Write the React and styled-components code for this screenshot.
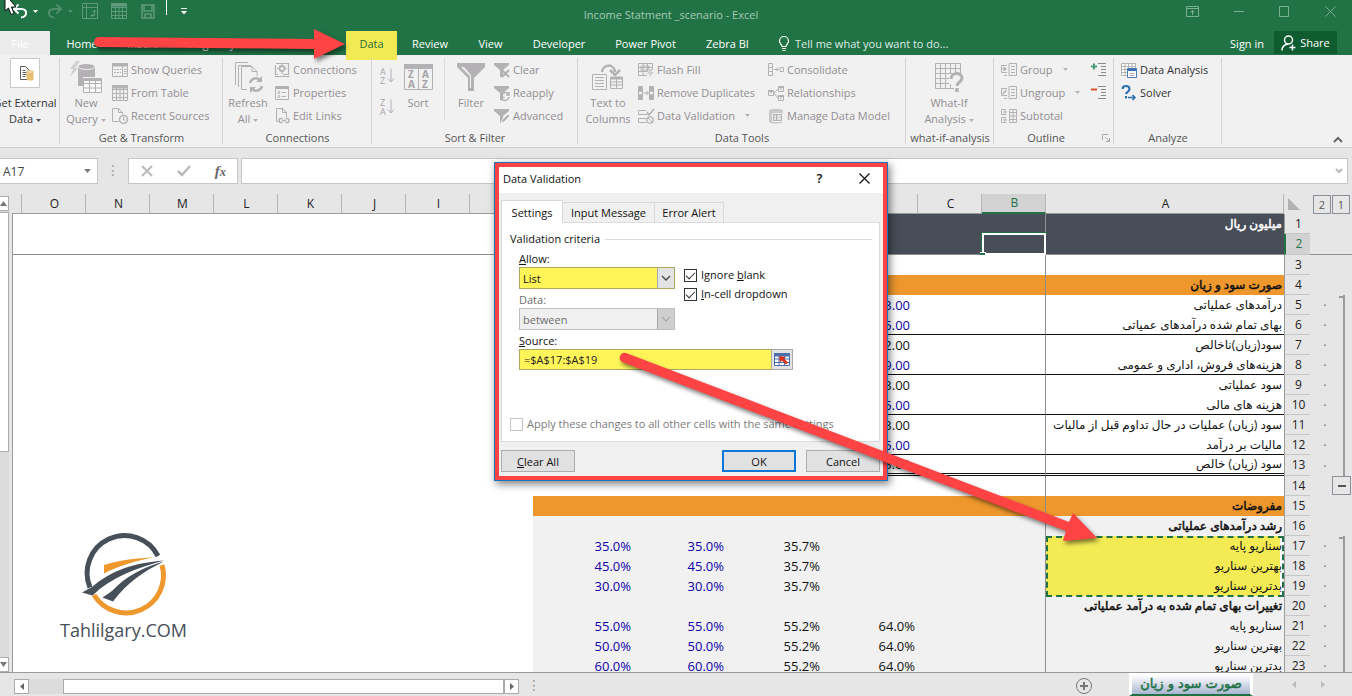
import React, { useState } from "react";
import styled, { createGlobalStyle, css } from "styled-components";

const GRAY = "#b4b1b4";

/* ---------- icons ---------- */

const Svg = ({ w = 16, h = 16, children, ...rest }) => (
  <svg
    width={w}
    height={h}
    viewBox={`0 0 ${w} ${h}`}
    fill="none"
    stroke={GRAY}
    aria-hidden="true"
    {...rest}
  >
    {children}
  </svg>
);

const UndoIcon = (props) => (
  <Svg w={16} h={16} strokeWidth="2" {...props}>
    <path d="M2 6H9.500C16 6 15.500 14 9 14.500M6.500 1.500L2 6L6.500 10.500" />
  </Svg>
);
const PivotIcon = () => (
  <Svg stroke="#5f9b7a">
    <path d="M.5.5h15v15H.5zM.5 4.500h15M4.500.5v15M9 12.500h3.500V7M10.500 9l2-2 2 2M11 10.500l-2 2 2 2" />
  </Svg>
);
const TableIcon = ({ color = GRAY }) => (
  <Svg stroke={color}>
    <path d="M.5.5h15v15H.5zM.5 4.500h15M.5 8.500h15M.5 12.500h15M4.500 3v12M8 3v12M11.500 3v12" />
    <path d="M1 2h14" strokeWidth="3" />
  </Svg>
);
const SaveIcon = () => (
  <Svg w={14} h={15} stroke="#5f9b7a" strokeWidth="1.500">
    <path d="M1 1h12v13H1zM3 1v6h8V1M4 14v-4h6v4" />
  </Svg>
);
const MouseIcon = () => (
  <Svg w={14} h={18} fill="#fff" stroke="#111">
    <path d="M1-6V11L4.500 8L7 14.500L10 13.500L7.500 7H12Z" />
  </Svg>
);
const GetDataIcon = () => (
  <Svg w={30} h={30} stroke="none">
    <path d="M.5.5h29v29H.5z" fill="#fff" stroke="#c9c9c9" />
    <path d="M10.500 8.500h5l4 4v9h-9z" fill="#fff" stroke="#5a5a5a" />
    <path d="M12.500 12.500h3M12.500 14.500h4M12.500 16.500h4M12.500 18.500h3" stroke="#5a5a5a" />
    <path d="M16.500 14v7c0 2 7 2 7 0v-7z" fill="#e8bd74" />
    <ellipse cx="20" cy="14" rx="3.500" ry="1.500" fill="#f4d9a8" stroke="#e0b060" strokeWidth=".6" />
  </Svg>
);
const NewQueryIcon = () => (
  <Svg w={34} h={34}>
    <path d="M7 1L1 9h3L1 17l8-9H6l5-7z" fill="#d2d0d2" stroke="none" />
    <path d="M9 7v19h5V17h12V7z" fill={GRAY} stroke="none" />
    <ellipse cx="17.500" cy="6.500" rx="8.500" ry="3" fill={GRAY} stroke="#f1f1f1" />
    <path d="M14.500 18.500h18v14h-18zM14.500 23.500h18M14.500 28h18M20.500 20v12M26.500 20v12" fill="#f8f8f8" />
    <path d="M15 19.500h17" strokeWidth="3" />
  </Svg>
);
const ShowQueriesIcon = () => (
  <Svg>
    <path d="M10.500 4v10M12 7.500h2.500M12 9.500h2.500M12 11.500h2.500" />
    <path d="M2 7.500h7M2 10.500h7" strokeDasharray="2 1" />
    <path d="M.5 1.500h15v13H.5z" />
    <path d="M1 3h14" strokeWidth="3" />
  </Svg>
);
const RecentIcon = () => (
  <Svg>
    <path d="M7 13.500H.5V.5h6l4 4V6M6.500.5v4h4" />
    <circle cx="11.500" cy="11.500" r="4" strokeWidth="1.500" />
    <path d="M11.500 9v3h2" />
  </Svg>
);
const RefreshIcon = () => (
  <Svg w={32} h={32}>
    <path d="M3.500 24V1.500H16M6.500 26V4.500H19M15 28.500H9.500v-23H20l5 5V15M20 5.500v5h5" />
    <path d="M18 22a6 6 0 0 1 10-3M30 25a6 6 0 0 1-10 3" strokeWidth="2.500" />
    <path d="M30 15v6h-6zM18 32v-6h6z" fill={GRAY} stroke="none" />
  </Svg>
);
const ConnectionsIcon = () => (
  <Svg>
    <path d="M2 1.500h12.500v11H9M1.500 3v9.500H4M.5 14.500h15" strokeWidth="1.200" />
    <circle cx="8" cy="6.500" r="2.500" strokeWidth="1.800" />
    <path d="M8 3V1.500M8 10v2M4.500 6.500H3M11.500 6.500H13" />
  </Svg>
);
const PropertiesIcon = () => (
  <Svg>
    <path d="M1.500 1.500h13v13h-13zM8 7.500h4M8 11.500h4" />
    <path d="M1.500 2.500h13" strokeWidth="3" />
    <circle cx="5" cy="7.500" r="1" />
    <circle cx="5" cy="11.500" r="1" />
  </Svg>
);
const EditLinksIcon = () => (
  <Svg>
    <path d="M4 13.500H2.500V.5h6l4 4V9M8.500.5v4h4" />
    <path d="M8.500 14.500H7a2 2 0 0 1 0-4h1.500M11.500 10.500H13a2 2 0 0 1 0 4h-1.500M8 12.500h4" strokeWidth="1.500" />
  </Svg>
);
const SortLetters = ({ top, bottom }) => (
  <Svg w={15} h={18}>
    <g fill="#a5a2a5" stroke="none" fontFamily="Open Sans, sans-serif" fontSize="9">
      <text x="0" y="8">{top}</text>
      <text x="0" y="17">{bottom}</text>
    </g>
    <path d="M11 1.500v13M8 11.500l3 3.500 3-3.500" />
  </Svg>
);
const SortIcon = () => (
  <Svg w={29} h={26}>
    <path d="M.5.5h28v25H.5zM14.500 4v21" />
    <path d="M0 2.500h29" strokeWidth="5" />
    <g fill="#a5a2a5" stroke="none" fontFamily="Open Sans, sans-serif" fontSize="10" fontWeight="700">
      <text x="4" y="14">Z</text>
      <text x="4" y="24">A</text>
      <text x="18" y="14">A</text>
      <text x="18" y="24">Z</text>
    </g>
  </Svg>
);
const FilterIcon = () => (
  <Svg w={28} h={28} stroke="none" fill={GRAY}>
    <path d="M0 0h28v4L17 15v13h-6V15L0 4z" />
    <path d="M4 4l9 9v12h1V12L7 4z" fill="#f1f1f1" />
  </Svg>
);
const SmallFilter = ({ kind }) => (
  <Svg>
    <path d="M0 1h15v2L9 8v7H6V8L0 3z" fill={GRAY} stroke="none" />
    {kind === "clear" && <path d="M8 8l7 7M15 8l-7 7" strokeWidth="2" />}
    {kind === "reapply" && (
      <path d="M7.500 11a4 4 0 0 1 7-2M15 12a4 4 0 0 1-7 2M15 7v3h-3M7.500 15.500v-3h3" strokeWidth="1.500" />
    )}
    {kind === "advanced" && <path d="M7 15l1-3 6-6 2 2-6 6z" fill={GRAY} stroke="#f1f1f1" />}
  </Svg>
);
const TextColumnsIcon = () => (
  <Svg w={32} h={28}>
    <path d="M.5 11.500h14v15H.5zM3 14.500h9M3 17.500h9M3 20.500h9M3 23.500h9" />
    <path d="M18.500 14.500h12v11h-12zM18.500 19h12M18.500 22h12M24.500 15v10" />
    <path d="M18.500 15h12" strokeWidth="3" />
    <path d="M10 9C11 1 22 0 23 9" strokeWidth="2.500" />
    <path d="M18 7l5 5 5-5" strokeWidth="2.500" />
  </Svg>
);
const FlashFillIcon = () => (
  <Svg>
    <path d="M.5 1.500h14V8M.5 1.500v12H9M.5 5.500h14M.5 9.500h9M5 1.500v12M9.500 1.500v8" />
    <path d="M3 4h8v4H3z" />
    <path d="M12 7l-3 5h3l-1 4 5-6h-3l2-3z" fill="#d2d0d2" stroke="none" />
  </Svg>
);
const RemoveDupIcon = () => (
  <Svg>
    <path d="M.5 1.500h4v13h-4zM.5 6h4M.5 10h4M11.500 1.500h4v13h-4zM11.500 6h4M11.500 10h4M5.500 8h5M8.500 6l2 2-2 2" />
    <path d="M1 2h3v4H1zM1 10h3v4H1zM12 2h3v4h-3zM12 10h3v4h-3z" fill={GRAY} />
  </Svg>
);
const ValidationIcon = () => (
  <Svg>
    <path d="M8 2.500H.5v4h9M8 10.500H.5v4H8" />
    <path d="M9 4l2 3 5-6" strokeWidth="1.500" />
    <circle cx="12" cy="12" r="3.200" strokeWidth="1.300" />
    <path d="M10 10l4 4" />
  </Svg>
);
const ConsolidateIcon = () => (
  <Svg>
    <path d="M.5 1.500h4v12h-4zM.5 5.500h4M.5 9.500h4M6 7.500h4M8.500 6l2 1.500-2 1.500M12 5.500h3.500v4H12z" />
  </Svg>
);
const RelationIcon = () => (
  <Svg>
    <path d="M.5 5.500h5v5h-5zM10.500 1.500h5v5h-5zM10.500 10.500h5v5h-5zM6 8l4-4M6 8l4 5M2 8h2M12 4h2M12 13h2" />
    <path d="M.5 6h5M10.500 2h5M10.500 11h5" strokeWidth="2" />
  </Svg>
);
const DataModelIcon = () => (
  <Svg>
    <path d="M1 3v10c0 2 3 2.500 7 2.500s7-.5 7-2.500V3c0-3-14-3-14 0z" fill="#c9c7c9" stroke="none" />
    <path d="M4.500 5.500h10v8h-10zM4.500 8h10M4.500 11h10M8 5.500v8M11 5.500v8" stroke="#f1f1f1" />
    <path d="M5.500 6.500h8v6h-8zM8.500 6v7" />
  </Svg>
);
const WhatIfIcon = () => (
  <Svg w={30} h={30}>
    <path d="M1.500 1.500h25v25h-25zM1.500 6.500h25M1.500 11.500h25M1.500 16.500h17M1.500 21.500h17M6.500 1.500v25M11.500 1.500v25M16.500 1.500v25M21.500 1.500v10" />
    <path d="M15 12h15v18H20v-8h-5z" fill="#f1f1f1" stroke="none" />
    <path d="M17 17c0-7 11-7 11-1 0 4-5 4-5 8" strokeWidth="3" />
    <path d="M23 26v4" strokeWidth="3.500" />
  </Svg>
);
const GroupIcon = ({ kind }) => (
  <Svg>
    {kind === "subtotal" ? (
      <path d="M5 1.500H.5v5h5M5 9.500H.5v5h5M2 4h4M4 2.500v3M2 12h4M4 10.500v3M8.500 1.500h7v13h-7zM8.500 4.500h7M8.500 8h7M8.500 11.500h7M12 1.500v13" />
    ) : (
      <>
        <path d="M6 3.500H.5v7H6M8 1.500h7.500v12H8zM10 4.500h4M10 7.500h4M10 10.500h4M3 13.500h3" />
        {kind === "group" ? (
          <path d="M1.500 7h4M3.500 5v4" strokeWidth="1.500" />
        ) : (
          <path d="M1.500 9l4-4" strokeWidth="1.500" />
        )}
      </>
    )}
  </Svg>
);
const DetailIcon = ({ plus }) => (
  <Svg w={15} h={16} stroke="#8a8a8a">
    <path d="M7 1.500h8M10 4.500h5M10 7.500h5M10 10.500h5M7 13.500h8" />
    {plus ? (
      <path d="M0 4.500h6M3 1.500v6" stroke="#4b9c7a" strokeWidth="2" />
    ) : (
      <path d="M0 4.500h6" stroke="#d9532c" strokeWidth="2" />
    )}
  </Svg>
);
const DataAnalysisIcon = () => (
  <Svg stroke="#b3b3b3">
    <path d="M.5 1.500h14v12H.5zM.5 4.500h14M.5 7.500h14M.5 10.500h14M4 1.500v12M7.500 1.500v12M11 1.500v12" fill="#fff" />
    <path d="M6.500 6.500h9v9h-9z" fill="#fff" stroke="#4a7fb5" />
    <path d="M6.500 7.500h9" stroke="#3a74b0" strokeWidth="3" />
    <path d="M8.500 11.500h5M8.500 13.500h5" stroke="#b0b0b0" />
  </Svg>
);
const SolverIcon = () => (
  <Svg stroke="#2b6fb3">
    <path d="M1.500 4c0-4 7-4 7 0 0 3-3.500 3-3.500 5M5 11v2.500" strokeWidth="2" />
    <path d="M7 12.500h7M11.500 10l2.500 2.500-2.500 2.500" strokeWidth="1.500" />
  </Svg>
);
const Caret = ({ color = GRAY, big }) => (
  <svg width={big ? 7 : 5} height={big ? 4 : 3} viewBox="0 0 5 3" fill={color} aria-hidden="true">
    <path d="M0 0h5L2.500 3z" />
  </svg>
);

const LogoMark = () => (
  <svg width="84" height="80" viewBox="0 0 84 80" fill="none" aria-hidden="true">
    <path d="M8 51.500A37.500 37.500 0 0 1 76 20" stroke="#474f59" strokeWidth="5" />
    <path d="M80 29A37.500 37.500 0 0 1 12 59" stroke="#ef982d" strokeWidth="5" />
    <path d="M22 29C38 24 56 22 71 21.500C54 25 38 29 22 37.500Z" fill="#ef982d" />
    <path d="M0 56.500L10 51C30 34 52 27 82 24.500C54 32 28 42 10.500 59.500Z" fill="#474f59" />
    <path d="M20.500 61.500L30 55C44 40 62 31 82 25.500C62 35 46 46 31 65.500Z" fill="#474f59" />
  </svg>
);

/* ---------- data ---------- */

const tabs = [
  { name: "Home", width: 64 },
  { name: "Insert", width: 56 },
  { name: "Page Layout", width: 102 },
  { name: "Formulas", width: 74 },
  { name: "Data", width: 51, active: true },
  { name: "Review", width: 66 },
  { name: "View", width: 55 },
  { name: "Developer", width: 82 },
  { name: "Power Pivot", width: 91 },
  { name: "Zebra BI", width: 73 },
];

const columns = [
  { name: "" },
  { name: "O", width: 64 },
  { name: "N", width: 64 },
  { name: "M", width: 64 },
  { name: "L", width: 64 },
  { name: "K", width: 64 },
  { name: "J", width: 64 },
  { name: "I", width: 64 },
  { name: "H", width: 63 },
  { name: "G", width: 101 },
  { name: "F", width: 93 },
  { name: "E", width: 96 },
  { name: "D", width: 95 },
  { name: "C", width: 64 },
  { name: "B", width: 64 },
  { name: "A", width: 238 },
];

const base = ["سناریو پایه", "بهترین سناریو", "بدترین سناریو"];

const rows = [
  { n: 1, fill: "dark", a: "میلیون ریال", bold: true },
  { n: 2, fill: "dark", height: 21, freeze: true },
  { n: 3 },
  { n: 4, fill: "orange", a: "صورت سود و زیان", bold: true },
  { n: 5, a: "درآمدهای عملیاتی", d: "3.00", blue: true, level: true, first: true },
  { n: 6, a: "بهای تمام شده درآمدهای عمیاتی", d: "5.00", blue: true, level: true, line: 1 },
  { n: 7, a: "سود(زیان)ناخالص", d: "2.00", level: true },
  { n: 8, a: "هزینه‌های فروش، اداری و عمومی", d: "9.00", blue: true, level: true, line: 1 },
  { n: 9, a: "سود عملیاتی", d: "3.00", level: true },
  { n: 10, a: "هزینه های مالی", d: "5.00", blue: true, level: true, line: 1 },
  { n: 11, a: "سود (زیان) عملیات در حال تداوم قبل از مالیات", d: "3.00", level: true },
  { n: 12, a: "مالیات بر درآمد", d: "5.00", blue: true, level: true, line: 1 },
  { n: 13, a: "سود (زیان) خالص", d: "3.00", level: true, line: 3, height: 21 },
  { n: 14, collapse: true },
  { n: 15, fill: "orange", a: "مفروضات", bold: true },
  { n: 16, fill: "light", a: "رشد درآمدهای عملیاتی", bold: true },
  { n: 17, fill: "light", a: base[0], mark: true, g: "35.0%", f: "35.0%", e: "35.7%", level: true, first: true },
  { n: 18, fill: "light", a: base[1], mark: true, g: "45.0%", f: "45.0%", e: "35.7%", level: true },
  { n: 19, fill: "light", a: base[2], mark: true, g: "30.0%", f: "30.0%", e: "35.7%", level: true },
  { n: 20, fill: "light", a: "تغییرات بهای تمام شده به درآمد عملیاتی", bold: true, level: true },
  { n: 21, fill: "light", a: base[0], g: "55.0%", f: "55.0%", e: "55.2%", d: "64.0%", level: true },
  { n: 22, fill: "light", a: base[1], g: "50.0%", f: "50.0%", e: "55.2%", d: "64.0%", level: true },
  { n: 23, fill: "light", a: base[2], g: "60.0%", f: "60.0%", e: "55.2%", d: "64.0%", level: true },
];

/* ---------- app ---------- */

const Big = ({ icon, lines, caret, width, dark }) => (
  <BigButton $width={width} $dark={dark}>
    <BigIcon $top={dark}>{icon}</BigIcon>
    {lines.map((line, idx) => (
      <span key={line}>
        {line}
        {caret && idx === lines.length - 1 && (
          <> <Caret color={dark ? "#555" : GRAY} /></>
        )}
      </span>
    ))}
  </BigButton>
);

const Small = ({ icon, text, caret, dark }) => (
  <SmallButton $dark={dark}>
    {icon}
    <span>{text}</span>
    {caret && <CaretBox><Caret /></CaretBox>}
  </SmallButton>
);

const Ribbon = () => (
  <RibbonBar>
    <Group $width={60} $pull>
      <GroupBody>
        <Big width={70} dark icon={<GetDataIcon />} lines={["Get External", "Data"]} caret />
      </GroupBody>
    </Group>
    <Group $width={163}>
      <GroupBody $pad={3} $gap={3}>
        <Big width={46} icon={<NewQueryIcon />} lines={["New", "Query"]} caret />
        <Stack>
          <Small icon={<ShowQueriesIcon />} text="Show Queries" />
          <Small icon={<TableIcon />} text="From Table" />
          <Small icon={<RecentIcon />} text="Recent Sources" />
        </Stack>
      </GroupBody>
      <GroupName>Get &amp; Transform</GroupName>
    </Group>
    <Group $width={149}>
      <GroupBody $pad={2} $gap={3}>
        <Big width={46} icon={<RefreshIcon />} lines={["Refresh", "All"]} caret />
        <Stack>
          <Small icon={<ConnectionsIcon />} text="Connections" />
          <Small icon={<PropertiesIcon />} text="Properties" />
          <Small icon={<EditLinksIcon />} text="Edit Links" />
        </Stack>
      </GroupBody>
      <GroupName>Connections</GroupName>
    </Group>
    <Group $width={206}>
      <GroupBody $pad={3}>
        <SortColumn>
          <IconButton aria-label="Sort A to Z"><SortLetters top="A" bottom="Z" /></IconButton>
          <IconButton aria-label="Sort Z to A"><SortLetters top="Z" bottom="A" /></IconButton>
        </SortColumn>
        <Big width={38} icon={<SortIcon />} lines={["Sort"]} />
        <Divider />
        <Big width={46} icon={<FilterIcon />} lines={["Filter"]} />
        <Stack>
          <Small icon={<SmallFilter kind="clear" />} text="Clear" />
          <Small icon={<SmallFilter kind="reapply" />} text="Reapply" />
          <Small icon={<SmallFilter kind="advanced" />} text="Advanced" />
        </Stack>
      </GroupBody>
      <GroupName>Sort &amp; Filter</GroupName>
    </Group>
    <Group $width={328}>
      <GroupBody $pad={2} $gap={2}>
        <Big width={56} icon={<TextColumnsIcon />} lines={["Text to", "Columns"]} />
        <Stack $width={128}>
          <Small icon={<FlashFillIcon />} text="Flash Fill" />
          <Small icon={<RemoveDupIcon />} text="Remove Duplicates" />
          <Small icon={<ValidationIcon />} text="Data Validation" caret />
        </Stack>
        <Stack>
          <Small icon={<ConsolidateIcon />} text="Consolidate" />
          <Small icon={<RelationIcon />} text="Relationships" />
          <Small icon={<DataModelIcon />} text="Manage Data Model" />
        </Stack>
      </GroupBody>
      <GroupName>Data Tools</GroupName>
    </Group>
    <Group $width={88}>
      <GroupBody>
        <Big width={86} icon={<WhatIfIcon />} lines={["What-If", "Analysis"]} caret />
      </GroupBody>
      <GroupName>what-if-analysis</GroupName>
    </Group>
    <Group $width={120}>
      <GroupBody $pad={7}>
        <Stack $width={90}>
          <Small icon={<GroupIcon kind="group" />} text="Group" caret />
          <Small icon={<GroupIcon kind="ungroup" />} text="Ungroup" caret />
          <Small icon={<GroupIcon kind="subtotal" />} text="Subtotal" />
        </Stack>
        <Stack>
          <SmallButton aria-label="Show Detail"><DetailIcon plus /></SmallButton>
          <SmallButton aria-label="Hide Detail"><DetailIcon /></SmallButton>
        </Stack>
      </GroupBody>
      <GroupName $launcher>
        <span>Outline</span>
        <Svg w={8} h={8} stroke="#aaa"><path d="M.5 6V.5H6M3 3l4 4M7.500 4v3.500H4" /></Svg>
      </GroupName>
    </Group>
    <Group $width={108}>
      <GroupBody $pad={7}>
        <Stack>
          <Small dark icon={<DataAnalysisIcon />} text="Data Analysis" />
          <Small dark icon={<SolverIcon />} text="Solver" />
        </Stack>
      </GroupBody>
      <GroupName>Analyze</GroupName>
    </Group>
    <Collapse aria-label="Collapse ribbon">
      <Svg w={10} h={7} stroke="#666" strokeWidth="2"><path d="M1 6l4-4 4 4" /></Svg>
    </Collapse>
  </RibbonBar>
);

const SheetRow = ({ row }) => {
  const cell = (key, extra = {}) => (
    <Cell $fill={row.fill} $line={row.line} $freeze={row.freeze} {...extra}>
      {row[key]}
    </Cell>
  );
  const pct = !!row.g;
  return (
    <Row $height={row.height || 20}>
      {columns.slice(0, 9).map((c, idx) => (
        <Cell key={idx} $freeze={row.freeze} />
      ))}
      {cell("g", { $blue: true })}
      {cell("f", { $blue: true })}
      {cell("e")}
      {cell("d", { $blue: row.blue, $accounting: !pct })}
      {cell("c")}
      <Cell $fill={row.fill} $line={row.line} $freeze={row.freeze} $paneEdge>
        {row.n === 2 && <ActiveCell />}
      </Cell>
      <Cell $fill={row.fill} $line={row.line} $freeze={row.freeze} $mark={row.mark} $bold={row.bold} dir="rtl" lang="fa">
        {row.a}
        {row.n === 17 && <Marquee />}
      </Cell>
      <RowHead scope="row" $active={row.n === 2}>{row.n}</RowHead>
      <Outline $level={row.level} $first={row.first} $freeze={row.freeze}>
        {row.level && "·"}
        {row.collapse && <CollapseRows aria-label="Collapse rows" />}
      </Outline>
      <Margin $freeze={row.freeze} />
    </Row>
  );
};

const Sheet = () => (
  <SheetArea>
    <VScroll>
      <ScrollButton aria-label="Scroll up"><Svg w={7} h={5} stroke="none" fill="#777"><path d="M0 5h7L3.500 0z" /></Svg></ScrollButton>
      <VThumb />
      <ScrollButton aria-label="Scroll down"><Svg w={7} h={5} stroke="none" fill="#777"><path d="M0 0h7L3.500 5z" /></Svg></ScrollButton>
    </VScroll>
    <GridBox>
      <Grid>
        <colgroup>
          {columns.map((c, idx) => (
            <Col key={idx} $width={c.width} />
          ))}
          <Col $width={26} />
          <Col $width={35} />
          <Col $width={7} />
        </colgroup>
        <thead>
          <tr>
            {columns.map((c, idx) => (
              <ColHead key={idx} scope="col" $active={c.name === "B"}>{c.name}</ColHead>
            ))}
            <Corner><Svg w={12} h={12} stroke="none" fill="#b1b1b1"><path d="M0 0v12h12z" /></Svg></Corner>
            <LevelHead colSpan={2}>
              <Levels>
                <LevelButton>2</LevelButton>
                <LevelButton>1</LevelButton>
              </Levels>
            </LevelHead>
          </tr>
        </thead>
        <tbody>
          {rows.map((row) => (
            <SheetRow key={row.n} row={row} />
          ))}
        </tbody>
      </Grid>
      <Logo>
        <LogoMark />
        <LogoText>Tahlilgary.COM</LogoText>
      </Logo>
    </GridBox>
  </SheetArea>
);

const Combo = ({ id, value, disabled, mark }) => (
  <ComboBox $disabled={disabled} $mark={mark}>
    <select id={id} defaultValue={value} disabled={disabled}>
      <option>{value}</option>
    </select>
    <ComboArrow $disabled={disabled}>
      <Svg w={10} h={6} stroke={disabled ? "#aaa" : "#444"} strokeWidth="1.300"><path d="M1 1l4 4 4-4" /></Svg>
    </ComboArrow>
  </ComboBox>
);

const DataValidation = () => {
  const [blank, setBlank] = useState(true);
  const [dropdown, setDropdown] = useState(true);
  const [source, setSource] = useState("=$A$17:$A$19");

  return (
    <Dialog role="dialog" aria-label="Data Validation">
      <DialogFrame>
        <DialogTitle>
          <span>Data Validation</span>
          <TitleButton aria-label="Help">?</TitleButton>
          <TitleButton aria-label="Close">
            <Svg w={11} h={11} stroke="#111" strokeWidth="1.200"><path d="M.5.5l10 10M10.500.5l-10 10" /></Svg>
          </TitleButton>
        </DialogTitle>
        <DialogBody>
          <DialogTabs>
            <DialogTab $width={62} $active>Settings</DialogTab>
            <DialogTab $width={92}>Input Message</DialogTab>
            <DialogTab $width={69}>Error Alert</DialogTab>
          </DialogTabs>
          <Panel>
            <Legend>Validation criteria</Legend>
            <Criteria>
              <div>
                <Label htmlFor="allow"><u>A</u>llow:</Label>
                <Combo id="allow" value="List" mark />
                <Label htmlFor="data" $muted>Data:</Label>
                <Combo id="data" value="between" disabled />
              </div>
              <Checks>
                <Check>
                  <input type="checkbox" checked={blank} onChange={() => setBlank(!blank)} />
                  <span>Ignore <u>b</u>lank</span>
                </Check>
                <Check>
                  <input type="checkbox" checked={dropdown} onChange={() => setDropdown(!dropdown)} />
                  <span><u>I</u>n-cell dropdown</span>
                </Check>
              </Checks>
            </Criteria>
            <SourceBlock>
              <Label htmlFor="source"><u>S</u>ource:</Label>
              <SourceRow>
                <SourceInput id="source" value={source} onChange={(e) => setSource(e.target.value)} />
                <PickButton aria-label="Select range">
                  <Svg w={16} h={13} stroke="#4a6fae">
                    <path d="M.5.5h15v12H.5z" fill="#fff" />
                    <path d="M0 2h16" strokeWidth="3" />
                    <path d="M.5 6h15M.5 9.500h15M5 0v13M10.500 0v13" />
                    <path d="M5 3l7 1-2 1.500 4 4-2 2-4-4-2 2z" fill="#d8331f" stroke="none" />
                  </Svg>
                </PickButton>
              </SourceRow>
            </SourceBlock>
            <Check $muted>
              <input type="checkbox" disabled />
              <span>Apply these changes to all other cells with the same settings</span>
            </Check>
          </Panel>
          <Actions>
            <DialogButton><u>C</u>lear All</DialogButton>
            <Spacer />
            <DialogButton $primary>OK</DialogButton>
            <DialogButton>Cancel</DialogButton>
          </Actions>
        </DialogBody>
      </DialogFrame>
    </Dialog>
  );
};

const App = () => (
  <>
    <GlobalStyle />
    <Window>
      <TitleBar>
        <Quick>
          <Mouse><MouseIcon /></Mouse>
          <QuickButton aria-label="Undo" $width={35}><UndoIcon stroke="#fff" /><Caret color="#fff" /></QuickButton>
          <QuickButton aria-label="Redo" $width={35}><Flip><UndoIcon stroke="#4f906c" /></Flip><Caret color="#4f906c" /></QuickButton>
          <QuickButton aria-label="Pivot" $width={29}><PivotIcon /></QuickButton>
          <QuickButton aria-label="Table" $width={30}><TableIcon color="#5f9b7a" /></QuickButton>
          <QuickButton aria-label="Save" $width={25}><SaveIcon /></QuickButton>
          <QuickLine />
          <QuickButton aria-label="Customize" $width={20}>
            <Svg w={6} h={7} stroke="none" fill="#fff"><path d="M0 0h6v1H0zM0 3h6L3 6.500z" /></Svg>
          </QuickButton>
        </Quick>
        <AppTitle>Income Statment _scenario - Excel</AppTitle>
        <WindowButtons>
          <QuickButton aria-label="Ribbon options"><Svg w={13} h={11} stroke="#7db092"><path d="M.5.5h12v10H.5zM.5 2.500h12M6.500 9V4.500M4.500 6.500l2-2 2 2" /></Svg></QuickButton>
          <QuickButton aria-label="Minimize"><Svg w={10} h={11} stroke="#7db092"><path d="M0 5.500h10" /></Svg></QuickButton>
          <QuickButton aria-label="Maximize"><Svg w={11} h={11} stroke="#7db092"><path d="M.5.5h9v10h-9z" /></Svg></QuickButton>
          <QuickButton aria-label="Close"><Svg w={11} h={11} stroke="#7db092"><path d="M.5.5l10 10M10.500.5l-10 10" /></Svg></QuickButton>
        </WindowButtons>
      </TitleBar>

      <TabBar>
        <FileTab>File</FileTab>
        {tabs.map((t) => (
          <Tab key={t.name} $width={t.width} $active={t.active}>{t.name}</Tab>
        ))}
        <TellMe>
          <Svg w={12} h={15} stroke="#fff" strokeWidth="1.200">
            <path d="M4 10.500C4 8.500 1.500 8 1.500 5a4.300 4.300 0 0 1 9 0c0 3-2.500 3.500-2.500 5.500zM4 12.500h4M4.500 14.500h3" />
          </Svg>
          <span>Tell me what you want to do...</span>
        </TellMe>
        <Spacer />
        <SignIn>Sign in</SignIn>
        <Share>
          <Svg w={16} h={16} stroke="#fff" strokeWidth="1.500">
            <circle cx="7.500" cy="5" r="4" />
            <path d="M1 15.500c0-4 3-6 6-6.500M11.500 9.500v6M8.500 12.500h6" />
          </Svg>
          Share
        </Share>
      </TabBar>

      <Ribbon />

      <FormulaBar>
        <NameBox>
          <input aria-label="Name box" defaultValue="A17" />
          <Caret color="#777" big />
        </NameBox>
        <Dots>⋮</Dots>
        <FormulaButtons>
          <Svg w={12} h={12} stroke="#bbb" strokeWidth="2"><path d="M1 1l10 10M11 1L1 11" /></Svg>
          <Svg w={14} h={12} stroke="#bbb" strokeWidth="2.500"><path d="M1 6l4 4 8-9" /></Svg>
          <Fx>f<small>x</small></Fx>
        </FormulaButtons>
        <FormulaField>
          <input aria-label="Formula" />
          <Svg w={8} h={6} stroke="#bbb" strokeWidth="2"><path d="M1 1l3 3 3-3" /></Svg>
        </FormulaField>
      </FormulaBar>

      <Sheet />

      <BottomBar>
        <HScroll>
          <HButton aria-label="Scroll left"><Svg w={4} h={7} stroke="none" fill="#666"><path d="M4 0v7L0 3.500z" /></Svg></HButton>
          <HTrack />
          <HThumb />
          <HButton aria-label="Scroll right"><Svg w={4} h={7} stroke="none" fill="#666"><path d="M0 0v7l4-3.500z" /></Svg></HButton>
        </HScroll>
        <Dots>⋮</Dots>
        <Spacer />
        <AddSheet aria-label="New sheet">
          <Svg w={16} h={16} stroke="#777"><circle cx="8" cy="8" r="7.500" /><path d="M4 8h8M8 4v8" strokeWidth="2" /></Svg>
        </AddSheet>
        <SheetTab lang="fa">صورت سود و زیان</SheetTab>
        <SheetNav>
          <Svg w={4} h={7} stroke="none" fill="#bbb"><path d="M4 0v7L0 3.500z" /></Svg>
          <Svg w={4} h={7} stroke="none" fill="#bbb"><path d="M0 0v7l4-3.500z" /></Svg>
        </SheetNav>
      </BottomBar>

      <DataValidation />
      <Arrows viewBox="0 0 1352 696" width="1352" height="696" aria-hidden="true">
        <path d="M99 37L314 39V29L345 44L314 59V49L99 47A5 5 0 0 1 99 37Z" />
        <path d="M626 353L1069 522L1073 513L1097 538L1063 541L1066 531L622 362A5 5 0 0 1 626 353Z" />
      </Arrows>
    </Window>
  </>
);

export default App;

/* ---------- styles ---------- */

const GlobalStyle = createGlobalStyle`
  *, *::before, *::after { box-sizing: border-box; }
  body {
    margin: 0;
    overflow: hidden;
    background: #e6e6e6;
  }
  body, button, input, select {
    font-family: "Open Sans", "DejaVu Sans", sans-serif;
    font-size: 11px;
    color: #222;
  }
  button {
    margin: 0;
    padding: 0;
    border: 0;
    background: none;
    white-space: nowrap;
  }
  svg {
    flex: none;
    overflow: visible;
  }
`;

/* Arabic-script bold is drawn as a thickened regular cut */
const thick = css`
  font-weight: normal;
  -webkit-text-stroke: 0.5px currentColor;
`;

const Window = styled.div`
  position: relative;
  display: flex;
  flex-direction: column;
  height: 100vh;
  overflow: hidden;
`;

const Spacer = styled.div`
  flex: 1;
`;

const TitleBar = styled.header`
  display: grid;
  grid-template-columns: 1fr auto 1fr;
  height: 31px;
  background: #217346;
`;
const Quick = styled.div`
  display: flex;
  align-items: center;
  height: 22px;
  padding-left: 12px;
`;
const Mouse = styled.span`
  position: absolute;
  left: 4px;
  top: 0;
  z-index: 2;
`;
const QuickButton = styled.button`
  display: flex;
  align-items: center;
  gap: 5px;
  width: ${({ $width }) => ($width ? `${$width}px` : "auto")};
`;
const Flip = styled.span`
  display: flex;
  transform: scaleX(-1);
`;
const QuickLine = styled.span`
  align-self: flex-start;
  width: 1px;
  height: 15px;
  margin-right: 14px;
  background: #fff;
`;
const AppTitle = styled.div`
  padding-right: 10px;
  line-height: 30px;
  color: #a6cab5;
`;
const WindowButtons = styled.div`
  display: flex;
  align-items: center;
  justify-content: flex-end;
  gap: 35px;
  height: 22px;
  padding-right: 16px;

  button { gap: 0; }
`;

const TabBar = styled.nav`
  display: flex;
  height: 24px;
  background: #217346;
`;
const Tab = styled.button`
  width: ${({ $width }) => $width}px;
  height: 24px;
  color: #fff;
  ${({ $active }) =>
    $active &&
    css`
      position: relative;
      height: 29px;
      padding-bottom: 5px;
      background: #f1ea53;
      color: #1d6a3c;
    `}
`;
const FileTab = styled.button`
  width: 50px;
  padding-right: 10px;
  background: #ececec;
  color: #fff;
`;
const TellMe = styled.button`
  display: flex;
  align-items: center;
  gap: 5px;
  margin-left: 14px;
  color: #dcebe2;
`;
const SignIn = styled.button`
  margin-right: 10px;
  color: #fff;
`;
const Share = styled.button`
  display: flex;
  align-items: center;
  justify-content: center;
  gap: 3px;
  width: 63px;
  height: 23px;
  margin-right: 15px;
  background: #0e5c2f;
  color: #fff;
`;

const RibbonBar = styled.div`
  display: flex;
  height: 93px;
  border-bottom: 1px solid #cfcfcf;
  background: #f1f1f1;
`;
const Group = styled.section`
  position: relative;
  display: flex;
  flex-direction: column;
  flex: none;
  width: ${({ $width }) => $width}px;
  ${({ $pull }) =>
    $pull &&
    css`
      align-items: flex-end;
    `}

  &::after {
    content: "";
    position: absolute;
    right: 0;
    top: 3px;
    width: 1px;
    height: 86px;
    background: #d4d4d4;
  }
`;
const GroupBody = styled.div`
  display: flex;
  gap: ${({ $gap }) => $gap || 0}px;
  height: 75px;
  padding-top: 3px;
  padding-left: ${({ $pad }) => $pad || 0}px;
`;
const GroupName = styled.div`
  position: relative;
  line-height: 18px;
  text-align: center;
  white-space: nowrap;
  color: #555;
  ${({ $launcher }) =>
    $launcher &&
    css`
      padding-right: 16px;

      svg {
        position: absolute;
        right: 4px;
        top: 5px;
      }
    `}
`;
const BigButton = styled.button`
  display: flex;
  flex-direction: column;
  align-items: center;
  flex: none;
  width: ${({ $width }) => $width}px;
  line-height: 16px;
  color: ${({ $dark }) => ($dark ? "#333" : "#918f91")};

  span svg { vertical-align: middle; }
`;
const BigIcon = styled.span`
  display: flex;
  align-items: ${({ $top }) => ($top ? "flex-start" : "center")};
  justify-content: center;
  height: 37px;
`;
const Stack = styled.div`
  flex: none;
  width: ${({ $width }) => ($width ? `${$width}px` : "auto")};
`;
const SmallButton = styled.button`
  display: flex;
  align-items: center;
  gap: 3px;
  height: 23px;
  color: ${({ $dark }) => ($dark ? "#333" : "#918f91")};
`;
const CaretBox = styled.span`
  display: flex;
  padding-left: 7px;
`;
const SortColumn = styled.div`
  display: flex;
  flex-direction: column;
  width: 24px;
  padding-left: 5px;
  gap: 13px;
  padding-top: 9px;
`;
const IconButton = styled.button`
  display: flex;
`;
const Divider = styled.span`
  width: 1px;
  height: 62px;
  margin: 0 3px 0 7px;
  background: #dcdcdc;
`;
const Collapse = styled.button`
  align-self: flex-end;
  height: 18px;
  margin: 0 9px 0 auto;
`;

const FormulaBar = styled.div`
  display: flex;
  height: 46px;
  padding: 10px 4px 10px 0;
  background: #e6e6e6;

  input {
    flex: 1;
    min-width: 0;
    border: 0;
    padding: 0 3px;
    background: none;
    outline: none;
    font-size: 12px;
    color: #444;
  }
`;
const Box = styled.div`
  display: flex;
  align-items: center;
  border: 1px solid #c6c6c6;
  background: #fff;
`;
const NameBox = styled(Box)`
  width: 98px;
  padding-right: 6px;
  border-left: 0;
`;
const Dots = styled.span`
  width: 30px;
  text-align: center;
  line-height: 24px;
  font-size: 14px;
  color: #999;
`;
const FormulaButtons = styled(Box)`
  justify-content: space-between;
  width: 110px;
  padding: 0 11px 0 12px;
`;
const Fx = styled.em`
  font-family: "Liberation Serif", serif;
  font-size: 15px;
  font-weight: bold;
  color: #666;
`;
const FormulaField = styled(Box)`
  flex: 1;
  margin-left: 3px;
  padding-right: 4px;
`;

const SheetArea = styled.main`
  display: flex;
  flex: 1;
  min-height: 0;
  background: #e6e6e6;
`;
const VScroll = styled.div`
  display: flex;
  flex-direction: column;
  width: 9px;
  margin: 2px 3px 0 0;
  background: #dcdcdc;
`;
const ScrollButton = styled.button`
  display: flex;
  align-items: center;
  height: 15px;
  border: 1px solid #ababab;
  border-left: 0;
  background: #fff;

  &:last-child { margin-top: auto; }
`;
const VThumb = styled.div`
  height: 240px;
  margin-top: 1px;
  border: 1px solid #ababab;
  border-left: 0;
  background: #fff;
`;
const GridBox = styled.div`
  position: relative;
  flex: 1;
  min-width: 0;
  overflow: hidden;
  box-shadow: inset 1px 0 #9b9b9b;
`;
const Grid = styled.table`
  width: 100%;
  table-layout: fixed;
  border-spacing: 0;
  font-size: 13px;
`;
const Col = styled.col`
  width: ${({ $width }) => ($width ? `${$width}px` : "auto")};
`;
const ColHead = styled.th`
  height: 20px;
  padding: 0 0 0 2px;
  border-right: 1px solid #b5b5b5;
  border-bottom: 1px solid #9b9b9b;
  background: #e6e6e6;
  font-size: 12px;
  font-weight: normal;
  line-height: 18px;
  color: #222;
  ${({ $active }) =>
    $active &&
    css`
      background: #d2d2d2;
      border-bottom: 2px solid #217346;
      color: #217346;
    `}
`;
const Corner = styled.th`
  padding: 0 0 0 4px;
  text-align: left;
  line-height: 12px;
`;
const LevelHead = styled.th`
  padding: 0;
`;
const Levels = styled.div`
  display: flex;
  gap: 1px;
  padding-left: 3px;
`;
const LevelButton = styled.button`
  width: 18px;
  height: 19px;
  border: 1px solid #8a8f99;
  line-height: 17px;
  color: #555;
`;
const Row = styled.tr`
  height: ${({ $height }) => $height}px;
`;
const fills = { dark: "#474e58", orange: "#ed972d", light: "#f1f1f1" };
const Cell = styled.td`
  position: relative;
  padding: 0 3px;
  background: ${({ $fill }) => fills[$fill] || "#fff"};
  line-height: 16px;
  text-align: right;
  white-space: nowrap;
  color: ${({ $blue, $fill, $bold }) =>
    $blue ? "#0d00a8" : $fill === "dark" && $bold ? "#fff" : "#111"};
  ${({ $line }) =>
    $line &&
    css`
      border-bottom: ${$line}px ${$line > 1 ? "double" : "solid"} #111;
    `}
  ${({ $freeze }) => $freeze && "border-bottom: 1px solid #8f8f8f;"}
  ${({ $paneEdge }) => $paneEdge && "border-right: 1px solid #8f8f8f;"}
  ${({ $accounting }) => $accounting && "padding-right: 8px;"}
  ${({ $mark }) => $mark && "background: linear-gradient(to left, #fff 4px, #f3ea54 4px);"}

  &:first-child {
    border-left: 1px solid #9b9b9b;
  }
  &[dir="rtl"] {
    padding: 0 2px;
    text-align: start;
    font-size: 12px;
    ${({ $bold }) => $bold && thick}
  }
`;
const ActiveCell = styled.div`
  position: absolute;
  inset: -1px -1px -1px 0;
  border: 2px solid #fff;
  outline: 1px solid #217346;

  &::after {
    content: "";
    position: absolute;
    left: -4px;
    bottom: -4px;
    width: 6px;
    height: 5px;
    background: #217346;
    border: solid #fff;
    border-width: 1px 1px 0 0;
  }
`;
const Marquee = styled.div`
  position: absolute;
  z-index: 1;
  top: 0;
  left: 0;
  right: 0;
  height: 61px;
  border: 2px dashed #217346;
`;
const RowHead = styled.th`
  padding: 0 0 0 2px;
  border-left: 1px solid #9b9b9b;
  border-bottom: 1px solid #c6c6c6;
  background: #e6e6e6;
  font-size: 12px;
  font-weight: normal;
  line-height: 16px;
  color: #222;
  ${({ $active }) =>
    $active &&
    css`
      border-left: 2px solid #217346;
      background: #d2d2d2;
      color: #217346;
    `}
`;
const Outline = styled.td`
  position: relative;
  padding: 0 5px 0 0;
  text-align: center;
  line-height: 16px;
  color: #777;
  ${({ $freeze }) => $freeze && "border-bottom: 1px solid #8f8f8f;"}
  ${({ $level }) =>
    $level &&
    css`
      padding-right: 3px;
      border-right: 2px solid #9b9b9b;
    `}
  ${({ $first }) =>
    $first &&
    css`
      &::before {
        content: "";
        position: absolute;
        top: 1px;
        right: 0;
        width: 4px;
        height: 2px;
        background: #9b9b9b;
      }
    `}
`;
const Margin = styled.td`
  padding: 0;
  ${({ $freeze }) => $freeze && "border-bottom: 1px solid #8f8f8f;"}
`;
const CollapseRows = styled.button`
  position: absolute;
  top: 0;
  right: -6px;
  width: 19px;
  height: 19px;
  border: 1px solid #8a8f99;
  background: #e6e6e6;

  &::after {
    content: "";
    display: block;
    width: 8px;
    height: 2px;
    margin: 0 auto;
    background: #555;
  }
`;

const Logo = styled.div`
  position: absolute;
  left: 48px;
  top: 342px;
  display: flex;
  flex-direction: column;
  align-items: center;
`;
const LogoText = styled.div`
  line-height: 28px;
  font-size: 18px;
  color: #474f59;
`;

const BottomBar = styled.footer`
  display: flex;
  align-items: stretch;
  height: 24px;
  border-top: 1px solid #9b9b9b;
  background: #e6e6e6;
`;
const HScroll = styled.div`
  display: flex;
  align-self: flex-end;
  width: 505px;
  height: 15px;
  margin: 0 0 2px 14px;
`;
const HButton = styled.button`
  display: flex;
  align-items: center;
  justify-content: center;
  width: 15px;
  border: 1px solid #ababab;
  background: #fff;
`;
const HTrack = styled.div`
  width: 34px;
  background: #dcdcdc;
`;
const HThumb = styled.div`
  flex: 1;
  border: 1px solid #ababab;
  background: #fff;
`;
const AddSheet = styled.button`
  display: flex;
  align-items: center;
  margin-right: 37px;
  padding-top: 2px;
`;
const SheetTab = styled.button`
  width: 124px;
  border: solid #fff;
  border-width: 0 3px;
  border-bottom: 2px solid #217346;
  background: linear-gradient(#fff 10%, #a9b6d2);
  font-family: "DejaVu Sans", sans-serif;
  font-size: 13px;
  color: #217346;
  ${thick}
`;
const SheetNav = styled.div`
  display: flex;
  align-items: center;
  gap: 25px;
  margin: 0 27px 0 39px;
`;

const Dialog = styled.div`
  position: absolute;
  z-index: 3;
  left: 494px;
  top: 162px;
  width: 394px;
  border: 1px solid #1b75bb;
  box-shadow: 2px 3px 8px rgba(0, 0, 0, 0.5);
`;
const DialogFrame = styled.div`
  border: 4px solid #fd4344;
  background: #f0f0f0;
`;
const DialogTitle = styled.div`
  display: flex;
  align-items: center;
  height: 26px;
  padding: 0 13px 4px 4px;
  background: #fff;
  color: #111;

  span { flex: 1; }
`;
const TitleButton = styled.button`
  display: flex;
  justify-content: center;
  width: 11px;
  margin-left: 34px;
  font-size: 13px;
  font-weight: 600;
  color: #111;
`;
const DialogBody = styled.div`
  padding: 7px 3px 4px 2px;
`;
const DialogTabs = styled.div`
  display: flex;
  align-items: flex-end;
`;
const DialogTab = styled.button`
  width: ${({ $width }) => $width}px;
  height: 20px;
  border: 1px solid #d9d9d9;
  border-bottom: 0;
  border-left-width: ${({ $active }) => ($active ? 1 : 0)}px;
  color: #111;
  ${({ $active }) =>
    $active &&
    css`
      position: relative;
      height: 23px;
      margin-bottom: -1px;
      background: #fff;
    `}
`;
const Panel = styled.div`
  height: 220px;
  padding: 7px 7px 0 8px;
  border: 1px solid #dcdcdc;
  background: #fff;
`;
const Legend = styled.div`
  display: flex;
  align-items: center;
  gap: 5px;
  line-height: 18px;
  color: #111;

  &::after {
    content: "";
    flex: 1;
    height: 1px;
    background: #dcdcdc;
  }
`;
const Criteria = styled.div`
  display: flex;
  gap: 9px;
  padding-left: 9px;
`;
const Label = styled.label`
  display: block;
  padding-top: 3px;
  line-height: 16px;
  color: ${({ $muted }) => ($muted ? "#6d6d6d" : "#111")};
`;
const ComboBox = styled.div`
  display: flex;
  width: 156px;
  height: 22px;
  border: 1px solid ${({ $disabled }) => ($disabled ? "#bfbfbf" : "#a9a85e")};
  background: ${({ $disabled, $mark }) => ($disabled ? "#f0f0f0" : $mark ? "#fff559" : "#fff")};

  select {
    flex: 1;
    padding: 0 3px;
    border: 0;
    outline: none;
    appearance: none;
    background: none;
    color: ${({ $disabled }) => ($disabled ? "#6d6d6d" : "#111")};
    opacity: 1;
  }
`;
const ComboArrow = styled.span`
  display: flex;
  align-items: center;
  justify-content: center;
  width: 17px;
  border-left: 1px solid #a9a9a9;
  background: ${({ $disabled }) => ($disabled ? "#cfcfcf" : "#e3e3e3")};
`;
const Checks = styled.div`
  display: flex;
  flex-direction: column;
  gap: 3px;
  padding-top: 19px;
`;
const Check = styled.label`
  display: flex;
  align-items: center;
  gap: 4px;
  line-height: 16px;
  white-space: nowrap;
  color: ${({ $muted }) => ($muted ? "#7b7b7b" : "#111")};

  input {
    appearance: none;
    display: grid;
    place-items: center;
    flex: none;
    width: 13px;
    height: 13px;
    margin: 0;
    border: 1px solid ${({ $muted }) => ($muted ? "#c4c4c4" : "#333")};
    background: #fff;
  }
  input:checked::after {
    content: "";
    width: 9px;
    height: 5px;
    border: solid #333;
    border-width: 0 0 1px 1px;
    transform: translateY(-1px) rotate(-45deg);
  }
`;
const SourceBlock = styled.div`
  height: 86px;
  padding-left: 9px;
`;
const SourceRow = styled.div`
  display: flex;
`;
const SourceInput = styled.input`
  width: 252px;
  height: 21px;
  padding: 0 4px;
  border: 1px solid #a9a85e;
  border-right: 0;
  background: #fff559;
  outline: none;
`;
const PickButton = styled.button`
  display: flex;
  align-items: center;
  justify-content: center;
  width: 22px;
  border: 1px solid #a9a9a9;
  background: #e3e3e3;
`;
const Actions = styled.div`
  display: flex;
  gap: 10px;
  padding-top: 8px;
`;
const DialogButton = styled.button`
  width: 74px;
  height: 22px;
  border: ${({ $primary }) => ($primary ? "2px solid #0b78d7" : "1px solid #adadad")};
  background: #e1e1e1;
  color: #111;
`;

const Arrows = styled.svg`
  position: absolute;
  z-index: 4;
  left: 0;
  top: 0;
  pointer-events: none;
  fill: #fd4344;
  filter: drop-shadow(2px 3px 2px rgba(0, 0, 0, 0.5));
`;
